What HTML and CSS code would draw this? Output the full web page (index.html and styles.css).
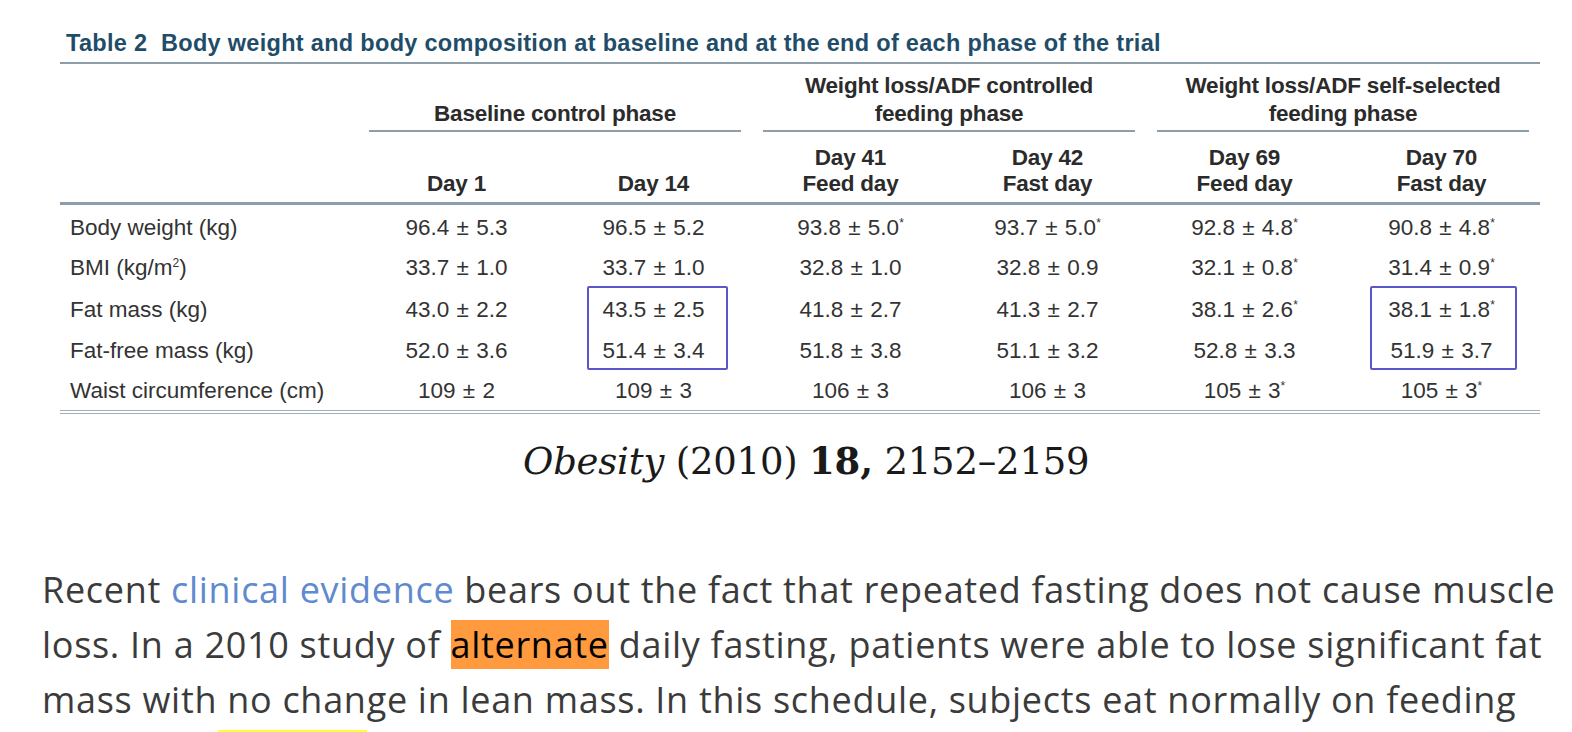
FILE: index.html
```html
<!DOCTYPE html>
<html>
<head>
<meta charset="utf-8">
<link rel="stylesheet" href="styles.css">
</head>
<body>
<div class="page">
  <figure class="figure">
    <div class="title">Table 2&nbsp; Body weight and body composition at baseline and at the end of each phase of the trial</div>
    <div class="table-wrap">
      <table class="data">
        <colgroup>
          <col class="c-label"><col class="c-val"><col class="c-val"><col class="c-val"><col class="c-val"><col class="c-val"><col class="c-val">
        </colgroup>
        <thead>
          <tr class="groups">
            <th></th>
            <th colspan="2"><div class="grp">Baseline control phase</div></th>
            <th colspan="2"><div class="grp">Weight loss/ADF controlled<br>feeding phase</div></th>
            <th colspan="2"><div class="grp">Weight loss/ADF self-selected<br>feeding phase</div></th>
          </tr>
          <tr class="days">
            <th></th>
            <th>Day 1</th>
            <th>Day 14</th>
            <th>Day 41<br>Feed day</th>
            <th>Day 42<br>Fast day</th>
            <th>Day 69<br>Feed day</th>
            <th>Day 70<br>Fast day</th>
          </tr>
        </thead>
        <tbody>
          <tr>
            <td>Body weight (kg)</td>
            <td>96.4 ± 5.3</td><td>96.5 ± 5.2</td><td>93.8 ± 5.0<sup>*</sup></td><td>93.7 ± 5.0<sup>*</sup></td><td>92.8 ± 4.8<sup>*</sup></td><td>90.8 ± 4.8<sup>*</sup></td>
          </tr>
          <tr>
            <td>BMI (kg/m<sup>2</sup>)</td>
            <td>33.7 ± 1.0</td><td>33.7 ± 1.0</td><td>32.8 ± 1.0</td><td>32.8 ± 0.9</td><td>32.1 ± 0.8<sup>*</sup></td><td>31.4 ± 0.9<sup>*</sup></td>
          </tr>
          <tr>
            <td>Fat mass (kg)</td>
            <td>43.0 ± 2.2</td><td>43.5 ± 2.5</td><td>41.8 ± 2.7</td><td>41.3 ± 2.7</td><td>38.1 ± 2.6<sup>*</sup></td><td>38.1 ± 1.8<sup>*</sup></td>
          </tr>
          <tr>
            <td>Fat-free mass (kg)</td>
            <td>52.0 ± 3.6</td><td>51.4 ± 3.4</td><td>51.8 ± 3.8</td><td>51.1 ± 3.2</td><td>52.8 ± 3.3</td><td>51.9 ± 3.7</td>
          </tr>
          <tr>
            <td>Waist circumference (cm)</td>
            <td>109 ± 2</td><td>109 ± 3</td><td>106 ± 3</td><td>106 ± 3</td><td>105 ± 3<sup>*</sup></td><td>105 ± 3<sup>*</sup></td>
          </tr>
        </tbody>
      </table>
      <div class="mark mark-a"></div>
      <div class="mark mark-b"></div>
    </div>
    <figcaption class="cite"><i>Obesity</i> (2010) <b>18,</b> 2152–2159</figcaption>
  </figure>
  <p class="body-text">Recent <a href="#" class="link">clinical evidence</a> bears out the fact that repeated fasting does not cause muscle loss. In a 2010 study of <span class="hl-orange">alternate</span> daily fasting, patients were able to lose significant fat mass with no change in lean mass. In this schedule, subjects eat normally on feeding days, and <span class="hl-yellow">fast only</span> on alternate days.</p>
</div>
</body>
</html>
```

FILE: styles.css
```css
* { box-sizing: border-box; }
html, body { margin: 0; padding: 0; background: #ffffff; }
body { width: 1572px; height: 732px; overflow: hidden; }

.page { padding-top: 28px; height: 732px; overflow: hidden; }

.figure {
  margin: 0 0 0 60px;
  width: 1480px;
  font-family: "Liberation Sans", Arial, sans-serif;
  color: #2e2e2e;
}

.title {
  font-weight: bold;
  font-size: 23.5px;
  letter-spacing: 0.3px;
  color: #1f4d69;
  padding: 2px 0 6px 6px;
  border-bottom: 2px solid #8c9ea9;
  line-height: 26px;
}

.table-wrap { position: relative; }

.data {
  width: 1480px;
  border-collapse: collapse;
  table-layout: fixed;
  font-size: 22.5px;
}
.c-label { width: 298px; }
.c-val { width: 197px; }

.data th { font-weight: bold; text-align: center; padding: 0; color: #2b2b2b; font-size: 22.5px; letter-spacing: -0.2px; }

.groups th { padding-top: 8px; vertical-align: bottom; }
.groups .grp {
  margin: 0 11px;
  line-height: 28px;
  padding-bottom: 2px;
  border-bottom: 2px solid #8c9ea9;
}

.days th {
  line-height: 26px;
  padding: 13px 0 5px;
  vertical-align: bottom;
  border-bottom: 3px solid #8c9ea9;
}

.data td {
  height: 41.5px;
  text-align: center;
  padding: 0;
  color: #333;
  word-spacing: 1px;
}
.data tbody tr:first-child td { padding-top: 4px; height: 44px; }
.data td:first-child { text-align: left; padding-left: 10px; word-spacing: 0; }
.data tbody tr:last-child td { border-bottom: 4px double #9fb0bb; height: 40px; }

.data sup { font-size: 12px; line-height: 0; vertical-align: 8px; }

.mark {
  position: absolute;
  border: 2px solid #5a57c8;
  border-radius: 2px;
  top: 222px;
  height: 84px;
}
.mark-a { left: 527px; width: 141px; }
.mark-b { left: 1310px; width: 147px; }

.cite {
  margin: 25px 0 0 463px;
  font-family: "DejaVu Serif", "Liberation Serif", serif;
  font-size: 37px;
  line-height: 44px;
  color: #1a1a1a;
  letter-spacing: -0.2px;
}

.body-text {
  margin: 78px 0 0 42px;
  width: 1525px;
  font-family: "Open Sans", "Noto Sans", sans-serif;
  font-size: 36px;
  letter-spacing: 0.7px;
  line-height: 55px;
  color: #3b3b3b;
}
.link { color: #5f8ad0; text-decoration: none; }
.hl-orange { background: #ff9a3e; color: #000; }
.hl-yellow { background: #ffff3a; }
```
